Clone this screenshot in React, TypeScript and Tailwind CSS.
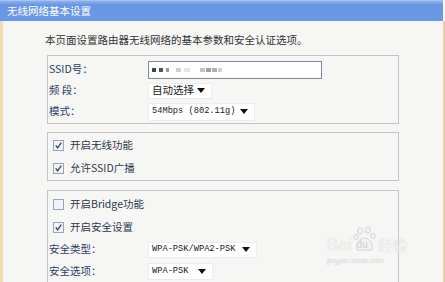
import React from "react";

const cjk = { fontFamily: '"Noto Sans CJK SC", "Noto Sans", sans-serif' };
const mono = { fontFamily: '"Liberation Mono", "DejaVu Sans Mono", monospace' };

function Arrow() {
  return (
    <svg width="8" height="5" viewBox="0 0 8 5" className="shrink-0">
      <path d="M0 0 H8 L4 5 Z" fill="#111" />
    </svg>
  );
}

function Select({ w, h, text, isMono }: { w: number; h: number; text: string; isMono?: boolean }) {
  return (
    <div
      className="flex items-center justify-between bg-white border border-[#ececec] pl-[3px] pr-[6px] text-[#222] whitespace-nowrap"
      style={{ width: w, height: h }}
    >
      <span className={isMono ? "text-[8.7px] leading-none" : "text-[10.5px] leading-none"} style={isMono ? mono : cjk}>
        {text}
      </span>
      <Arrow />
    </div>
  );
}

function Check({ checked }: { checked: boolean }) {
  return (
    <svg width="11" height="11" viewBox="0 0 11 11" className="shrink-0">
      <rect x="0.5" y="0.5" width="10" height="10" fill="#f1f3f6" stroke="#97a6b7" />
      {checked && <path d="M2.8 5.3 L4.6 7.8 L8.3 2.6" fill="none" stroke="#3a4458" strokeWidth="1.3" />}
    </svg>
  );
}

function CheckRow({ checked, label }: { checked: boolean; label: string }) {
  return (
    <div className="flex items-center h-[23px] pl-[5px] gap-[6px]">
      <Check checked={checked} />
      <span className="text-[10.5px] text-[#2e394b] leading-none whitespace-nowrap" style={cjk}>
        {label}
      </span>
    </div>
  );
}

function LabelRow({ label, h, children }: { label: string; h: number; children: React.ReactNode }) {
  return (
    <div className="flex items-center" style={{ height: h }}>
      <span className="w-[100px] shrink-0 pl-[1px] text-[10.5px] text-[#2a3f66] leading-none whitespace-nowrap" style={cjk}>
        {label}
      </span>
      {children}
    </div>
  );
}

export default function App() {
  return (
    <div className="w-[445px] h-[282px] overflow-hidden flex flex-col bg-[#f6f6f4] relative" style={cjk}>
      <div className="h-[21px] shrink-0 flex items-center pl-[7px] bg-[linear-gradient(#8db2ee,#6797e4_20%,#6a99e5)] border-t border-[#a9c3ee] mr-[2px]">
        <span className="text-[10.5px] text-white leading-none">无线网络基本设置</span>
      </div>
      <div className="flex-1 border-l-[3px] border-l-[#f0dcb0] border-r-[2px] border-r-[#e9d09c] pl-[44px]">
        <div className="pt-[12px] h-[26px] text-[10.5px] text-[#333] leading-[14px] -ml-[2px] whitespace-nowrap">
          本页面设置路由器无线网络的基本参数和安全认证选项。
        </div>
        <div className="mt-[8px] w-[352px] border border-[#c4c4c4] pt-[3px] pb-[1px]">
          <LabelRow label="SSID号：" h={21}>
            <div className="w-[174px] h-[18px] bg-white border border-[#7b8a9b] flex items-center pl-[2px]">
              <div className="w-[4px] h-[4px] bg-[#444] ml-[1px]" />
              <div className="w-[4px] h-[4px] bg-[#555] ml-[3px]" />
              <div className="w-[3px] h-[4px] bg-[#999] ml-[3px]" />
              <div className="w-[5px] h-[4px] bg-[#d0d0d0] ml-[7px]" />
              <div className="w-[6px] h-[4px] bg-[#e6e6e6] ml-[3px]" />
              <div className="w-[5px] h-[4px] bg-[#c4c4c4] ml-[10px]" />
              <div className="w-[5px] h-[4px] bg-[#a0a0a0] ml-[1px]" />
              <div className="w-[5px] h-[4px] bg-[#b0b0b0] ml-[1px]" />
              <div className="w-[4px] h-[4px] bg-[#d0d0d0] ml-[1px]" />
            </div>
          </LabelRow>
          <LabelRow label="频 段：" h={21}>
            <Select w={64} h={16} text="自动选择" />
          </LabelRow>
          <LabelRow label="模式：" h={21}>
            <Select w={107} h={18} text="54Mbps (802.11g)" isMono />
          </LabelRow>
        </div>
        <div className="mt-[8px] w-[352px] border border-[#c4c4c4] pt-[1px]">
          <CheckRow checked label="开启无线功能" />
          <CheckRow checked label="允许SSID广播" />
        </div>
        <div className="mt-[9px] w-[352px] border border-[#c4c4c4] pt-[2px]">
          <CheckRow checked={false} label="开启Bridge功能" />
          <CheckRow checked label="开启安全设置" />
          <LabelRow label="安全类型：" h={21}>
            <Select w={109} h={16} text="WPA-PSK/WPA2-PSK" isMono />
          </LabelRow>
          <LabelRow label="安全选项：" h={22}>
            <Select w={65} h={17} text="WPA-PSK" isMono />
          </LabelRow>
        </div>
      </div>
      {/* Baidu watermark */}
      <div className="absolute left-[327px] top-[226px] flex flex-col pointer-events-none">
        <div className="flex items-end">
          <span className="text-[17px] leading-[16px] text-[#f4f4f4] [text-shadow:0_0_1px_#c4c4c4]" style={{ fontFamily: '"Liberation Sans", sans-serif' }}>
            Bai
          </span>
          <div className="relative w-[24px] h-[27px] mx-[1px]">
            <svg width="24" height="27" viewBox="0 0 24 27" className="absolute left-0 top-0">
              <g fill="#f2f2f2" stroke="#cdcdcd" strokeWidth="0.8">
                <ellipse cx="7" cy="5" rx="2.6" ry="3.2" />
                <ellipse cx="15" cy="4" rx="2.6" ry="3.2" />
                <ellipse cx="3" cy="11" rx="2.2" ry="2.8" />
                <ellipse cx="20" cy="10" rx="2.2" ry="2.8" />
                <path d="M4 24 C2 18 7 12 11.5 12 C16 12 21 18 19 24 Z" />
              </g>
            </svg>
            <span className="absolute left-[4px] top-[14px] text-[10px] leading-none text-[#d0d0d0]" style={{ fontFamily: '"Liberation Sans", sans-serif' }}>
              du
            </span>
          </div>
          <span className="text-[15px] leading-[16px] text-[#f4f4f4] [text-shadow:0_0_1px_#c4c4c4]">经验</span>
        </div>
        <span className="text-[7px] leading-none mt-[4px] text-[#e6e6e6] [text-shadow:0_0_1px_#d0d0d0]" style={{ fontFamily: '"Liberation Sans", sans-serif' }}>
          jingyan.baidu.com
        </span>
      </div>
    </div>
  );
}
